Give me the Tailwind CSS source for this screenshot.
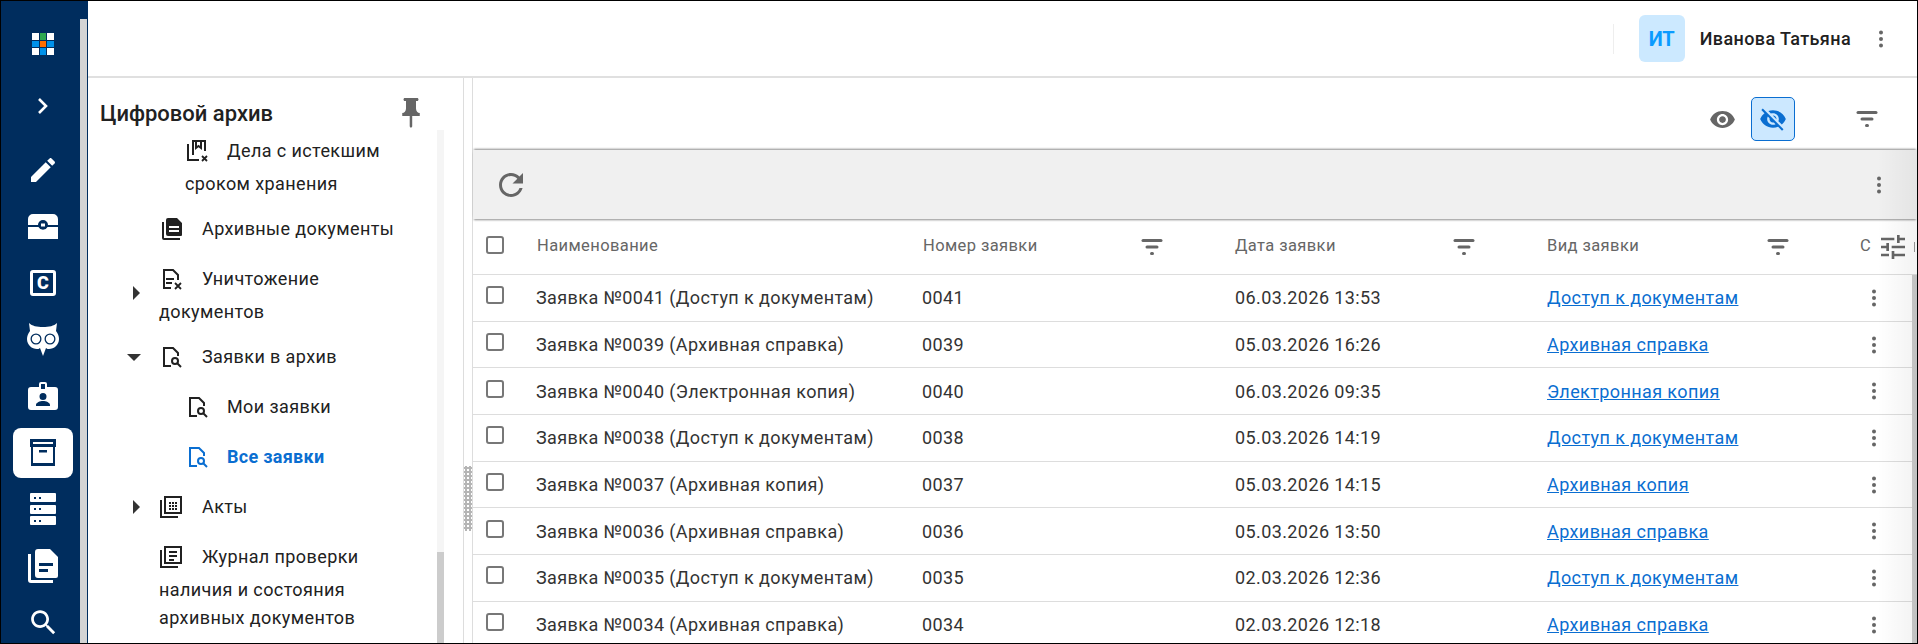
<!DOCTYPE html>
<html lang="ru">
<head>
  <meta charset="UTF-8" />
  <title>Цифровой архив</title>
  <script src="https://cdn.jsdelivr.net/npm/@tailwindcss/browser@4"></script>
</head>
<body class="bg-white">
<div class="w-[1918px] h-[644px] flex border border-black overflow-hidden relative font-['Roboto',sans-serif] text-[#212121]">

  <!-- Icon rail -->
  <aside class="w-[87px] shrink-0 bg-[#002d5e] relative text-white">
    <div class="w-[84px] flex flex-col items-center">
      <div class="h-[86px] w-full flex items-center justify-center">
        <div class="grid grid-cols-3 gap-px w-[22px]">
          <i class="h-[6.6px] bg-white"></i><i class="h-[6.6px] bg-[#2ea84f]"></i><i class="h-[6.6px] bg-white"></i>
          <i class="h-[6.6px] bg-[#0091ea]"></i><i class="h-[6.6px] bg-[#ff6d00]"></i><i class="h-[6.6px] bg-[#0091ea]"></i>
          <i class="h-[6.6px] bg-white"></i><i class="h-[6.6px] bg-[#0091ea]"></i><i class="h-[6.6px] bg-white"></i>
        </div>
      </div>
      <div class="h-[38px] w-full flex items-center justify-center">
        <svg class="w-[14px] h-[18px]" viewBox="0 0 14 18" fill="none" stroke="currentColor" stroke-width="2.6"><path d="M3 2l7 7-7 7"/></svg>
      </div>
      <div class="h-[56.5px] w-full mt-[17px] flex items-center justify-center">
        <svg class="w-[32px] h-[32px]" viewBox="0 0 24 24" fill="currentColor"><path d="M3 17.25V21h3.75L17.81 9.94l-3.75-3.75L3 17.25zM20.71 7.04c.39-.39.39-1.02 0-1.41l-2.34-2.34c-.39-.39-1.02-.39-1.41 0l-1.83 1.83 3.75 3.75 1.83-1.83z"/></svg>
      </div>
      <div class="h-[56.5px] w-full flex items-center justify-center">
        <svg class="w-[30px] h-[25px]" viewBox="0 0 30 25" fill="currentColor"><path d="M5 0h20a5 5 0 0 1 5 5v6H20a5 5 0 0 0-10 0H0V5a5 5 0 0 1 5-5zM0 13h10.500a5 5 0 0 0 9 0H30v12H0z"/><rect x="12.500" y="9" width="5" height="4" fill="#fff" stroke="#002d5e" stroke-width="1"/></svg>
      </div>
      <div class="h-[56.5px] w-full flex items-center justify-center">
        <div class="w-[26px] h-[26px] border-[3px] border-white rounded-[3px] flex items-center justify-center text-[18px] leading-none font-black">C</div>
      </div>
      <div class="h-[56.5px] w-full flex items-center justify-center">
        <svg class="w-[32px] h-[33px]" viewBox="0 0 32 33" fill="currentColor"><path fill-rule="evenodd" d="M2 0c3 3 8 4 14 4s11-1 14-4l-1 8c2 3 3 5 3 8 0 6-5 10-10 10-1 0-2 0-3-1l-3 8-3-8c-1 1-2 1-3 1C5 26 0 22 0 16c0-3 1-5 3-8zM9 10.500a5.500 5.500 0 1 0 0 11 5.500 5.500 0 0 0 0-11zm14 0a5.500 5.500 0 1 0 0 11 5.500 5.500 0 0 0 0-11z"/><circle cx="9" cy="16" r="4.200"/><circle cx="23" cy="16" r="4.200"/></svg>
      </div>
      <div class="h-[56.5px] w-full flex items-center justify-center">
        <svg class="w-[30px] h-[28px]" viewBox="0 0 30 28" fill="currentColor"><path fill-rule="evenodd" d="M3 5h8V2a2 2 0 0 1 2-2h4a2 2 0 0 1 2 2v3h8a3 3 0 0 1 3 3v17a3 3 0 0 1-3 3H3a3 3 0 0 1-3-3V8a3 3 0 0 1 3-3zm10-3v5h4V2zm2 9a3.500 3.500 0 1 0 0 7 3.500 3.500 0 0 0 0-7zm-7 13h14v-1c0-2.500-4-4-7-4s-7 1.500-7 4z"/></svg>
      </div>
      <div class="h-[56.5px] w-full flex items-center justify-center">
        <div class="w-[60px] h-[50px] bg-white rounded-[8px] flex items-center justify-center">
          <svg class="w-[26px] h-[27px]" viewBox="0 0 26 27" fill="#002d5e"><path fill-rule="evenodd" d="M0 0h26v8h-1v19H1V8H0zm3 3v2h20V3zm0 5v16h20V8zm6 3h8v2.500H9z"/></svg>
        </div>
      </div>
      <div class="h-[56.5px] w-full flex flex-col items-center justify-center gap-[2.500px]">
        <div class="w-[26px] h-[9px] bg-white rounded-[1px] flex items-center gap-[3px] pl-[4px]"><i class="w-[2px] h-[2px] bg-[#002d5e]"></i><i class="w-[2px] h-[2px] bg-[#002d5e]"></i></div>
        <div class="w-[26px] h-[9px] bg-white rounded-[1px] flex items-center gap-[3px] pl-[4px]"><i class="w-[2px] h-[2px] bg-[#002d5e]"></i><i class="w-[2px] h-[2px] bg-[#002d5e]"></i></div>
        <div class="w-[26px] h-[9px] bg-white rounded-[1px] flex items-center gap-[3px] pl-[4px]"><i class="w-[2px] h-[2px] bg-[#002d5e]"></i><i class="w-[2px] h-[2px] bg-[#002d5e]"></i></div>
      </div>
      <div class="h-[56.5px] w-full flex items-center justify-center">
        <svg class="w-[30px] h-[34px]" viewBox="0 0 30 34" fill="currentColor"><path d="M0 5h3v26h22v3H3a3 3 0 0 1-3-3z"/><path fill-rule="evenodd" d="M10 0h12l8 8v19a2 2 0 0 1-2 2H10a3 3 0 0 1-3-3V3a3 3 0 0 1 3-3zm1 14v3h14v-3zm0 6v3h9v-3z"/></svg>
      </div>
      <div class="h-[56.5px] w-full flex items-center justify-center">
        <svg class="w-[33px] h-[33px]" viewBox="0 0 24 24" fill="currentColor"><path d="M15.5 14h-.79l-.28-.27C15.41 12.59 16 11.11 16 9.5 16 5.91 13.09 3 9.5 3S3 5.91 3 9.5 5.91 16 9.5 16c1.61 0 3.09-.59 4.23-1.57l.27.28v.79l5 4.99L20.49 19l-4.99-5zm-6 0C7.01 14 5 11.99 5 9.5S7.01 5 9.5 5 14 7.01 14 9.5 11.99 14 9.5 14z"/></svg>
      </div>
    </div>
    <div class="absolute left-[79px] top-[18px] bottom-0 w-[7px] bg-[#d4d4d4]"></div>
  </aside>

  <div class="flex-1 flex flex-col min-w-0">
    <!-- Top bar -->
    <header class="h-[77px] shrink-0 flex items-center justify-end border-b-2 border-[#e0e0e0] pr-[24px]">
      <div class="w-px h-[30px] bg-[#eeeeee] mr-[25px]"></div>
      <div class="w-[46px] h-[47px] rounded-[6px] bg-[#cce9ff] flex items-center justify-center text-[20px] font-bold text-[#0a9bff]">ИТ</div>
      <span class="ml-[15px] text-[18px] tracking-[0.4px] font-medium">Иванова Татьяна</span>
      <svg class="w-[24px] h-[24px] ml-[18px] text-[#666]" viewBox="0 0 24 24" fill="currentColor"><circle cx="12" cy="5.500" r="2"/><circle cx="12" cy="12" r="2"/><circle cx="12" cy="18.500" r="2"/></svg>
    </header>

    <div class="flex-1 flex min-h-0">
      <!-- Archive tree -->
      <section class="w-[376px] shrink-0 border-r border-[#dddddd] relative pt-[17px]">
        <div class="flex items-center justify-between h-[36px] pl-[12px] pr-[37px]">
          <h1 class="text-[22px] font-medium">Цифровой архив</h1>
          <svg class="w-[30px] h-[36px] text-[#666]" viewBox="0 0 24 24" preserveAspectRatio="none" fill="currentColor"><path d="M16 9V4h1c.55 0 1-.45 1-1s-.45-1-1-1H7c-.55 0-1 .45-1 1s.45 1 1 1h1v5c0 1.66-1.34 3-3 3v2h5.970v7l1 1 1-1v-7H19v-2c-1.660 0-3-1.340-3-3z"/></svg>
        </div>
        <div class="absolute left-[349px] top-[52px] bottom-0 w-[7px] bg-[#f5f5f5]">
          <div class="absolute left-0 right-0 bottom-0 h-[91px] bg-[#cccccc]"></div>
        </div>
        <nav class="text-[18px] tracking-[0.4px] leading-[28px] flex flex-col gap-[10px]">
          <div class="pl-[97px] pb-px">
            <div class="h-[39px] flex items-center">
              <svg class="w-[24px] h-[24px] mr-[18px]" viewBox="0 0 24 24" fill="none" stroke="currentColor" stroke-width="2"><path d="M3 5v16h11M8 16V2h12v10M11 2v7l2.500-2 2.500 2V2" /><path d="M17 17l5 5m0-5l-5 5" stroke-width="1.800"/></svg>
              Дела с истекшим
            </div>
            <div>сроком хранения</div>
          </div>
          <div class="pl-[71px] h-[40px] flex items-center">
            <svg class="w-[24px] h-[24px] mr-[19px]" viewBox="0 0 24 24" fill="currentColor"><path d="M3 5h2v16h16v2H5a2 2 0 0 1-2-2z"/><path fill-rule="evenodd" d="M9 1h9l5 5v12a1 1 0 0 1-1 1H9a2 2 0 0 1-2-2V3a2 2 0 0 1 2-2zm1 8v2h10V9zm0 4v2h10v-2z"/></svg>
            Архивные документы
          </div>
          <div class="relative pl-[71px] pb-px">
            <span class="absolute left-[45px] top-[27px] border-y-[7px] border-y-transparent border-l-[7px] border-l-[#333]"></span>
            <div class="h-[39px] flex items-center">
              <svg class="w-[24px] h-[24px] mr-[19px]" viewBox="0 0 24 24" fill="none" stroke="currentColor" stroke-width="2"><path d="M12 21H5V3h9l5 5v5M7 12h8M7 16h6"/><path d="M16 16l6 6m0-6l-6 6" stroke-width="1.800"/></svg>
              Уничтожение
            </div>
            <div>документов</div>
          </div>
          <div class="relative pl-[71px] h-[40px] flex items-center">
            <span class="absolute left-[39px] top-[17px] border-x-[7px] border-x-transparent border-t-[7px] border-t-[#333]"></span>
            <svg class="w-[24px] h-[24px] mr-[19px]" viewBox="0 0 24 24" fill="none" stroke="currentColor" stroke-width="2"><path d="M12 21H5V3h9l5 5v3"/><circle cx="16" cy="16" r="3"/><path d="M18 18l4 4"/></svg>
            Заявки в архив
          </div>
          <div class="pl-[97px] h-[40px] flex items-center">
            <svg class="w-[24px] h-[24px] mr-[18px]" viewBox="0 0 24 24" fill="none" stroke="currentColor" stroke-width="2"><path d="M12 21H5V3h9l5 5v3"/><circle cx="16" cy="16" r="3"/><path d="M18 18l4 4"/></svg>
            Мои заявки
          </div>
          <div class="pl-[97px] h-[40px] flex items-center text-[#0a6ed1] font-bold tracking-[0.3px]">
            <svg class="w-[24px] h-[24px] mr-[18px]" viewBox="0 0 24 24" fill="none" stroke="currentColor" stroke-width="2"><path d="M12 21H5V3h9l5 5v3"/><circle cx="16" cy="16" r="3"/><path d="M18 18l4 4"/></svg>
            Все заявки
          </div>
          <div class="relative pl-[71px] h-[40px] flex items-center">
            <span class="absolute left-[45px] top-[13px] border-y-[7px] border-y-transparent border-l-[7px] border-l-[#333]"></span>
            <svg class="w-[24px] h-[24px] mr-[19px]" viewBox="0 0 24 24" fill="none" stroke="currentColor" stroke-width="2"><path d="M2 5v17h17M6 2h16v16H6z"/><path d="M10 8h8M10 11h8M10 14h8" stroke-dasharray="2 1"/></svg>
            Акты
          </div>
          <div class="pl-[71px]">
            <div class="h-[39px] flex items-center">
              <svg class="w-[24px] h-[24px] mr-[19px]" viewBox="0 0 24 24" fill="none" stroke="currentColor" stroke-width="2"><path d="M2 5v17h17M6 2h16v16H6zM10 7h8M10 11h8M10 15h5"/></svg>
              Журнал проверки
            </div>
            <div>наличия и состояния</div>
            <div>архивных документов</div>
          </div>
        </nav>
        <!-- splitter grip -->
        <div class="absolute left-[376px] top-[388px] w-[8px] h-[65px] bg-[radial-gradient(#b5b5b5_1.6px,transparent_1.7px)] bg-[length:4px_4px]"></div>
      </section>

      <!-- Requests table -->
      <main class="flex-1 min-w-0 pl-[8px]">
        <div class="h-full border-l border-[#dddddd] flex flex-col relative">
          <div class="h-[72px] shrink-0 pt-[10px] flex items-center justify-end">
            <svg class="w-[27px] h-[27px] text-[#666]" viewBox="0 0 24 24" fill="currentColor"><path d="M12 4.500C7 4.500 2.730 7.610 1 12c1.730 4.390 6 7.500 11 7.500s9.270-3.110 11-7.500c-1.730-4.390-6-7.500-11-7.500zM12 17c-2.760 0-5-2.240-5-5s2.240-5 5-5 5 2.240 5 5-2.240 5-5 5zm0-8c-1.660 0-3 1.340-3 3s1.340 3 3 3 3-1.340 3-3-1.340-3-3-3z"/></svg>
            <button class="ml-[15px] w-[44px] h-[44px] rounded-[5px] border border-[#0a6ed1] bg-[#cce8ff] flex items-center justify-center text-[#0a6ed1]">
              <svg class="w-[28px] h-[28px]" viewBox="0 0 24 24" fill="currentColor"><path d="M12 7c2.760 0 5 2.240 5 5 0 .65-.13 1.260-.36 1.830l2.920 2.920c1.510-1.260 2.700-2.890 3.430-4.750-1.730-4.390-6-7.500-11-7.500-1.400 0-2.740.25-3.980.7l2.160 2.160C10.740 7.130 11.350 7 12 7zM2 4.270l2.280 2.280.46.46C3.080 8.300 1.780 10.020 1 12c1.730 4.390 6 7.500 11 7.500 1.550 0 3.030-.3 4.380-.84l.42.42L19.730 22 21 20.730 3.270 3 2 4.270zM7.530 9.800l1.550 1.550c-.05.21-.08.43-.08.65 0 1.660 1.340 3 3 3 .22 0 .44-.03.65-.08l1.550 1.550c-.67.33-1.410.53-2.200.53-2.760 0-5-2.240-5-5 0-.79.2-1.530.53-2.200zm4.310-.78l3.150 3.150.02-.16c0-1.660-1.340-3-3-3l-.17.01z"/></svg>
            </button>
            <svg class="w-[24px] h-[24px] ml-[60px] mr-[38px] text-[#666]" viewBox="0 0 24 24" fill="currentColor"><rect x="1.500" y="4" width="21" height="3" rx="1.500"/><rect x="5.500" y="10.500" width="13" height="3" rx="1.500"/><rect x="10" y="17" width="4" height="3" rx="1.500"/></svg>
          </div>
          <div class="h-[69px] shrink-0 bg-[#f0f0f0] shadow-[0_-2px_2px_-1px_rgba(0,0,0,0.45),0_2px_2px_-1px_rgba(0,0,0,0.45)] flex items-center justify-between pl-[20px] pr-[26px] relative">
            <svg class="w-[36px] h-[36px] text-[#666]" viewBox="0 0 24 24" fill="currentColor"><path d="M17.650 6.350C16.200 4.900 14.210 4 12 4c-4.420 0-7.990 3.580-7.990 8s3.570 8 7.990 8c3.730 0 6.840-2.550 7.730-6h-2.080c-.82 2.330-3.040 4-5.650 4-3.310 0-6-2.690-6-6s2.690-6 6-6c1.660 0 3.140.69 4.220 1.780L13 11h7V4l-2.350 2.350z"/></svg>
            <svg class="w-[24px] h-[24px] text-[#666]" viewBox="0 0 24 24" fill="currentColor"><circle cx="12" cy="5.500" r="2"/><circle cx="12" cy="12" r="2"/><circle cx="12" cy="18.500" r="2"/></svg>
          </div>
          <div class="flex-1 min-h-0 overflow-hidden relative">
            <div class="h-[56px] grid grid-cols-[63px_387px_312px_312px_313px_1fr] items-center border-b border-[#dddddd] text-[16.500px] tracking-[0.4px] text-[#666666]">
              <span class="pl-[13px]"><i class="block w-[18px] h-[18px] border-2 border-[#777] rounded-[3px] mb-[4px]"></i></span>
              <span class="pl-[1px]">Наименование</span>
              <span class="flex items-center justify-between pr-[71px]">Номер заявки<svg class="w-[24px] h-[24px]" viewBox="0 0 24 24" fill="currentColor"><rect x="1.500" y="4" width="21" height="3" rx="1.500"/><rect x="5.500" y="10.500" width="13" height="3" rx="1.500"/><rect x="10" y="17" width="4" height="3" rx="1.500"/></svg></span>
              <span class="flex items-center justify-between pr-[71px]">Дата заявки<svg class="w-[24px] h-[24px]" viewBox="0 0 24 24" fill="currentColor"><rect x="1.500" y="4" width="21" height="3" rx="1.500"/><rect x="5.500" y="10.500" width="13" height="3" rx="1.500"/><rect x="10" y="17" width="4" height="3" rx="1.500"/></svg></span>
              <span class="flex items-center justify-between pr-[70px]">Вид заявки<svg class="w-[24px] h-[24px]" viewBox="0 0 24 24" fill="currentColor"><rect x="1.500" y="4" width="21" height="3" rx="1.500"/><rect x="5.500" y="10.500" width="13" height="3" rx="1.500"/><rect x="10" y="17" width="4" height="3" rx="1.500"/></svg></span>
              <span class="flex items-center">С<svg class="w-[32px] h-[32px] ml-[6px]" viewBox="0 0 24 24" fill="currentColor"><path d="M3 17v2h6v-2H3zM3 5v2h10V5H3zm10 16v-2h8v-2h-8v-2h-2v6h2zM7 9v2H3v2h4v2h2V9H7zm14 4v-2H11v2h10zm-6-4h2V7h4V5h-4V3h-2v6z"/></svg><i class="w-px h-[10px] bg-[#999] ml-[5px]"></i></span>
            </div>
            <div id="rows"></div>
            <div class="absolute right-0 top-[56px] bottom-0 w-[5px] bg-[#cccccc]"></div>
          </div>
          <div class="absolute right-0 top-[72px] bottom-0 w-[40px] bg-linear-to-r from-transparent to-black/5"></div>
        </div>
      </main>
    </div>
  </div>
</div>

<script>
  const zayavki = [
    ["0041", "Доступ к документам", "06.03.2026 13:53"],
    ["0039", "Архивная справка", "05.03.2026 16:26"],
    ["0040", "Электронная копия", "06.03.2026 09:35"],
    ["0038", "Доступ к документам", "05.03.2026 14:19"],
    ["0037", "Архивная копия", "05.03.2026 14:15"],
    ["0036", "Архивная справка", "05.03.2026 13:50"],
    ["0035", "Доступ к документам", "02.03.2026 12:36"],
    ["0034", "Архивная справка", "02.03.2026 12:18"]
  ];

  document.getElementById("rows").innerHTML = zayavki.map(z => `
    <div class="h-[46.7px] grid grid-cols-[63px_387px_312px_312px_313px_1fr] items-center border-b border-[#dddddd] text-[18px] tracking-[0.4px] text-[#333333]">
      <span class="pl-[13px]"><i class="block w-[18px] h-[18px] border-2 border-[#777] rounded-[3px] mb-[5px]"></i></span>
      <span>Заявка №${z[0]} (${z[1]})</span>
      <span class="ml-[-1px]">${z[0]}</span>
      <span>${z[2]}</span>
      <a href="#" class="underline text-[#0a6ed1]">${z[1]}</a>
      <svg class="w-[24px] h-[24px] ml-[2px] text-[#666]" viewBox="0 0 24 24" fill="currentColor"><circle cx="12" cy="5.500" r="2"/><circle cx="12" cy="12" r="2"/><circle cx="12" cy="18.500" r="2"/></svg>
    </div>`).join("");
</script>
</body>
</html>
